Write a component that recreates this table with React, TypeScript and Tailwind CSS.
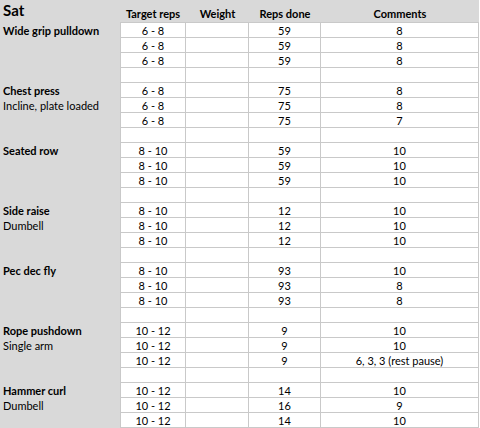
import React from 'react';

type Row = { label?: string; bold?: boolean; target: string; done: string; comment: string };

const exercises: { name: string; sub?: string; target: string; done: string[]; comments: string[] }[] = [
  { name: 'Wide grip pulldown', target: '6 - 8', done: ['59', '59', '59'], comments: ['8', '8', '8'] },
  { name: 'Chest press', sub: 'Incline, plate loaded', target: '6 - 8', done: ['75', '75', '75'], comments: ['8', '8', '7'] },
  { name: 'Seated row', target: '8 - 10', done: ['59', '59', '59'], comments: ['10', '10', '10'] },
  { name: 'Side raise', sub: 'Dumbell', target: '8 - 10', done: ['12', '12', '12'], comments: ['10', '10', '10'] },
  { name: 'Pec dec fly', target: '8 - 10', done: ['93', '93', '93'], comments: ['10', '8', '8'] },
  { name: 'Rope pushdown', sub: 'Single arm', target: '10 - 12', done: ['9', '9', '9'], comments: ['10', '10', '6, 3, 3 (rest pause)'] },
  { name: 'Hammer curl', sub: 'Dumbell', target: '10 - 12', done: ['14', '16', '14'], comments: ['10', '9', '10'] },
];

const rows: Row[] = [];
exercises.forEach((ex, i) => {
  for (let k = 0; k < 3; k++) {
    rows.push({
      label: k === 0 ? ex.name : k === 1 ? ex.sub : undefined,
      bold: k === 0,
      target: ex.target,
      done: ex.done[k],
      comment: ex.comments[k],
    });
  }
  if (i < exercises.length - 1) rows.push({ target: '', done: '', comment: '' });
});

const cell = 'h-[15px] border-r border-b border-[#c9c9c9] bg-white flex items-center justify-center leading-none';

export default function App() {
  return (
    <div
      className="w-[480px] h-[428px] bg-white text-black text-[11px] overflow-hidden"
      style={{ fontFamily: 'Lato, "Liberation Sans", sans-serif' }}
    >
      {/* header */}
      <div className="flex h-[22px] w-[479px] bg-[#d9d9d9] font-bold">
        <div className="w-[120px] pl-[3px] pt-[3px] text-[15px] leading-none">Sat</div>
        <div className="w-[66px] flex justify-center pt-[8px] leading-none">Target reps</div>
        <div className="w-[63px] flex justify-center pt-[8px] leading-none">Weight</div>
        <div className="w-[72px] flex justify-center pt-[8px] leading-none">Reps done</div>
        <div className="w-[158px] flex justify-center pt-[8px] leading-none">Comments</div>
      </div>
      <div className="flex h-px">
        <div className="w-[120px] bg-[#d9d9d9]" />
        <div className="w-[359px] bg-[#c9c9c9]" />
      </div>

      {rows.map((r, i) => (
        <div key={i} className="flex h-[15px]">
          <div
            className={`w-[120px] h-[15px] bg-[#d9d9d9] pl-[3px] flex items-center leading-none ${r.bold ? 'font-bold' : ''}`}
          >
            {r.label}
          </div>
          <div className={`${cell} w-[66px] border-l`}>{r.target}</div>
          <div className={`${cell} w-[63px]`}></div>
          <div className={`${cell} w-[72px]`}>{r.done}</div>
          <div className={`${cell} w-[158px]`}>{r.comment}</div>
        </div>
      ))}
    </div>
  );
}
